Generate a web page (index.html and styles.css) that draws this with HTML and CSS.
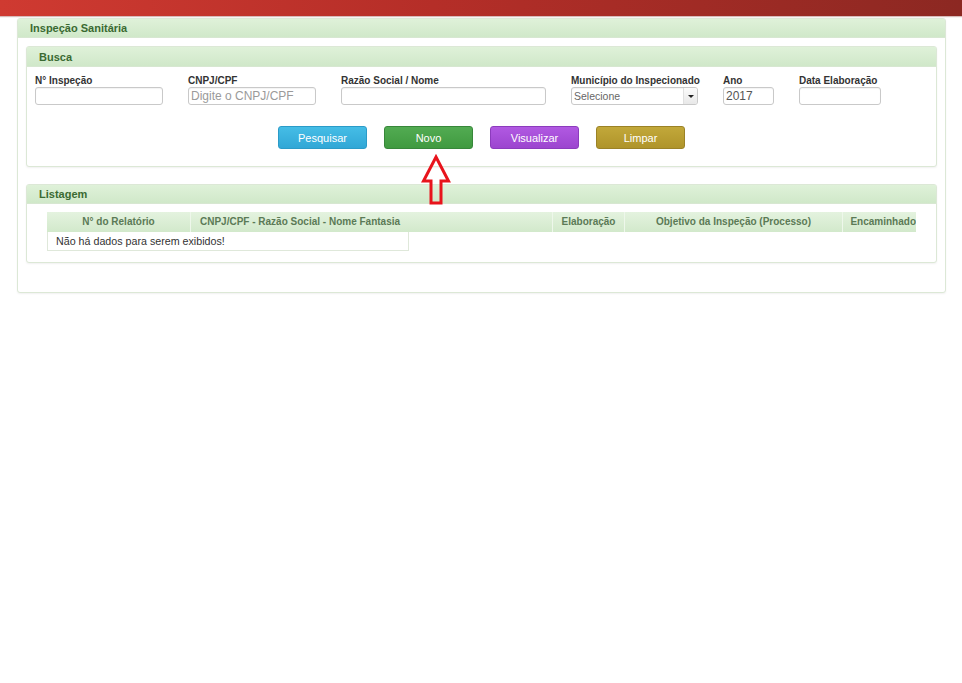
FILE: index.html
```html
<!DOCTYPE html>
<html lang="pt-BR">
<head>
<meta charset="utf-8">
<title>Inspeção Sanitária</title>
<link rel="stylesheet" href="styles.css">
</head>
<body>
<div class="topbar"></div>
<div class="page">
  <section class="panel outer">
    <div class="panel-head">Inspeção Sanitária</div>
    <div class="outer-body">
      <section class="panel">
        <div class="panel-head sub">Busca</div>
        <div class="busca-body">
          <div class="fields">
            <div class="field w1"><label>N° Inspeção</label><div class="input"></div></div>
            <div class="field w2"><label>CNPJ/CPF</label><div class="input placeholder">Digite o CNPJ/CPF</div></div>
            <div class="field w3"><label>Razão Social / Nome</label><div class="input"></div></div>
            <div class="field w4"><label>Município do Inspecionado</label>
              <div class="input select"><span class="sel-text">Selecione</span><span class="sel-arrow"></span></div>
            </div>
            <div class="field w5"><label>Ano</label><div class="input value">2017</div></div>
            <div class="field w6"><label>Data Elaboração</label><div class="input"></div></div>
          </div>
          <div class="buttons">
            <button class="btn blue">Pesquisar</button>
            <button class="btn green">Novo</button>
            <button class="btn purple">Visualizar</button>
            <button class="btn gold">Limpar</button>
          </div>
        </div>
      </section>
      <section class="panel list">
        <div class="panel-head list-head">Listagem</div>
        <div class="list-body">
          <div class="table">
            <div class="thead">
              <div class="th c1">N° do Relatório</div>
              <div class="th c2">CNPJ/CPF - Razão Social - Nome Fantasia</div>
              <div class="th c3">Elaboração</div>
              <div class="th c4">Objetivo da Inspeção (Processo)</div>
              <div class="th c5">Encaminhado</div>
            </div>
            <div class="empty">Não há dados para serem exibidos!</div>
          </div>
        </div>
      </section>
    </div>
  </section>
</div>
<svg class="arrow" width="32" height="56" viewBox="0 0 32 56">
  <polygon points="16,4 28.5,28 21,28 21,50 11,50 11,28 3.5,28" fill="none" stroke="#e8141c" stroke-width="3" stroke-linejoin="miter"/>
</svg>
</body>
</html>
```
FILE: styles.css
```css
* { box-sizing: border-box; }
html, body { margin: 0; padding: 0; background: #fff; }
body {
  font-family: "Liberation Sans", Arial, sans-serif;
  font-size: 11px;
  color: #333;
  position: relative;
  width: 962px;
  height: 683px;
}
.topbar {
  height: 16px;
  background: linear-gradient(to right, #cf3a31 0%, #b52e28 45%, #8c2822 100%);
  box-shadow: 0 1px 1px rgba(120, 30, 20, 0.3);
}
.page {
  padding: 2px 0 0 17px;
}
.panel {
  border: 1px solid #dce8d6;
  border-radius: 3px;
  background: #fff;
  box-shadow: 0 1px 2px rgba(0, 0, 0, 0.06);
}
.outer {
  width: 929px;
}
.panel-head {
  height: 19px;
  line-height: 19px;
  padding-left: 12px;
  font-weight: bold;
  font-size: 11px;
  color: #3a6a32;
  background: linear-gradient(#dff1d9, #d0e8c9);
  border-bottom: 1px solid #d7e7d1;
  font-family: "Liberation Sans", Arial, sans-serif;
}
.panel-head.sub {
  height: 20px;
  line-height: 20px;
}
.panel-head.list-head {
  height: 19px;
  line-height: 19px;
}
.outer-body {
  padding: 8px 8px 29px 8px;
  display: flex;
  flex-direction: column;
  gap: 17px;
}
.busca-body {
  padding: 7px 8px 17px 8px;
}
.fields {
  display: flex;
  gap: 25px;
}
.field {
  display: flex;
  flex-direction: column;
}
.field label {
  font-weight: bold;
  font-size: 10px;
  color: #333;
  height: 13px;
  line-height: 14px;
  white-space: nowrap;
}
.w1 { width: 128px; }
.w2 { width: 128px; }
.w3 { width: 205px; }
.w4 { width: 127px; }
.w5 { width: 51px; }
.w6 { width: 82px; }
.input {
  height: 18px;
  border: 1px solid #c9c9c9;
  border-radius: 3px;
  box-shadow: inset 0 1px 1px rgba(0, 0, 0, 0.05);
  padding: 0 2px;
  line-height: 16px;
  font-size: 12px;
  background: #fff;
}
.placeholder { color: #9a9a9a; }
.value { color: #555; }
.select {
  display: flex;
  align-items: center;
  padding: 0 0 0 2px;
  overflow: hidden;
}
.sel-text {
  flex: 1;
  font-size: 10.5px;
  color: #666;
}
.sel-arrow {
  width: 14px;
  height: 16px;
  background: linear-gradient(#fbfbfb, #e8e8e8);
  border-left: 1px solid #e0e0e0;
  position: relative;
}
.sel-arrow::after {
  content: "";
  position: absolute;
  left: 4px;
  top: 7px;
  border-left: 3px solid transparent;
  border-right: 3px solid transparent;
  border-top: 3px solid #222;
}
.buttons {
  display: flex;
  justify-content: center;
  gap: 17px;
  margin-top: 21px;
}
.btn {
  width: 89px;
  height: 23px;
  border-radius: 3px;
  color: #fff;
  font-family: "Liberation Sans", Arial, sans-serif;
  font-size: 11px;
  padding: 0;
  cursor: pointer;
}
.blue { background: linear-gradient(#45bde6, #31a7d6); border: 1px solid #2b9bc8; }
.green { background: linear-gradient(#52ab52, #409a40); border: 1px solid #37873a; }
.purple { background: linear-gradient(#b159e2, #9c45cf); border: 1px solid #8c3bbd; }
.gold { background: linear-gradient(#c2a83a, #af942a); border: 1px solid #9b8226; }
.list-body {
  padding: 8px 20px 11px 20px;
}
.table {
  overflow: hidden;
}
.thead {
  display: flex;
  height: 20px;
  background: linear-gradient(#e4f3df, #d2e9cb);
}
.th {
  flex: none;
  text-align: center;
  line-height: 20px;
  font-weight: bold;
  font-size: 10px;
  color: #5b7a56;
  white-space: nowrap;
  overflow: hidden;
  border-right: 1px solid #eef7eb;
}
.c1 { width: 144px; }
.c2 { width: 362px; text-align: left; padding-left: 9px; }
.c3 { width: 72px; }
.c4 { width: 218px; }
.c5 { width: 73px; border-right: none; text-align: right; padding-right: 0; }
.empty {
  width: 362px;
  height: 19px;
  line-height: 18px;
  border: 1px solid #dfe8da;
  border-top: none;
  padding-left: 8px;
  font-size: 10.7px;
  color: #333;
}
.arrow {
  position: absolute;
  left: 420px;
  top: 153px;
}
```
